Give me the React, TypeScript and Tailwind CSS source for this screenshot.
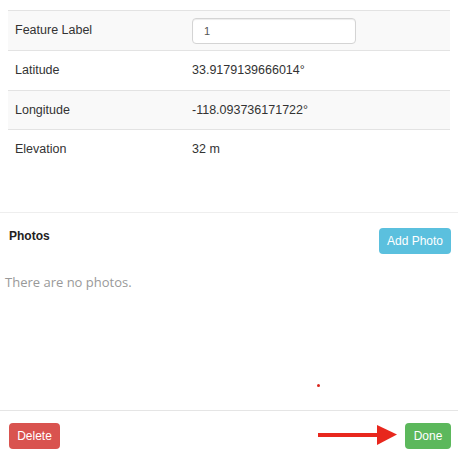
import React from "react";

type Row = { label: string; value?: string; input?: string };

const rows: Row[] = [
  { label: "Feature Label", input: "1" },
  { label: "Latitude", value: "33.9179139666014°" },
  { label: "Longitude", value: "-118.093736171722°" },
  { label: "Elevation", value: "32 m" },
];

const rowHeights = ["h-[40px]", "h-[40px]", "h-[39px]", "h-[40px]"];

export default function App() {
  return (
    <div className="relative flex h-[455px] w-[458px] flex-col overflow-hidden bg-white font-['Liberation_Sans',Arial,sans-serif] text-[#333]">
      {/* feature details */}
      <div className="mx-[8px] mt-[10px]">
        {rows.map((row, i) => (
          <div
            key={row.label}
            className={`flex items-center border-t border-[#e3e3e3] ${rowHeights[i]} ${
              i % 2 === 0 ? "bg-[#f9f9f9]" : "bg-white"
            }`}
          >
            <div className="w-[184px] pl-[7px] text-[12.5px]">{row.label}</div>
            {row.input ? (
              <input
                readOnly
                value={row.input}
                className="h-[26px] w-[164px] rounded-[4px] border border-[#d4d4d4] bg-white pl-[11px] text-[11px] text-[#555] shadow-[inset_0_1px_1px_rgba(0,0,0,0.075)] outline-none"
              />
            ) : (
              <div className="text-[12.5px]">{row.value}</div>
            )}
          </div>
        ))}
      </div>

      <div className="mt-[43px] border-t border-[#eeeeee]" />

      {/* photos */}
      <div className="flex items-start justify-between pl-[9px] pr-[7px] pt-[15px]">
        <h3 className="mt-[1px] text-[12px] font-bold leading-[14px] text-[#222]">Photos</h3>
        <button className="h-[26px] w-[72px] rounded-[4px] bg-[#5bc0de] text-[12px] text-white">
          Add Photo
        </button>
      </div>
      <p className="mt-[18px] pl-[5px] font-['Open_Sans',sans-serif] text-[13px] leading-[20px] text-[#999]">
        There are no photos.
      </p>

      {/* footer */}
      <div className="mt-auto flex items-start justify-between border-t border-[#e5e5e5] pb-[6px] pl-[9px] pr-[7px] pt-[12px]">
        <button className="h-[26px] w-[51px] rounded-[4px] bg-[#d9534f] text-[12px] text-white">
          Delete
        </button>
        <button className="h-[26px] w-[46px] rounded-[4px] bg-[#5cb85c] text-[12px] text-white">
          Done
        </button>
      </div>

      {/* annotation overlay */}
      <span className="absolute left-[317px] top-[384px] h-[3px] w-[3px] rounded-full bg-[#d9251c]" />
      <svg
        className="absolute left-[318px] top-[424px]"
        width="80"
        height="22"
        viewBox="0 0 80 22"
      >
        <rect x="0" y="9" width="62" height="4" fill="#e8271d" />
        <polygon points="59,1 79,10.5 59,21" fill="#e8271d" />
      </svg>
    </div>
  );
}
